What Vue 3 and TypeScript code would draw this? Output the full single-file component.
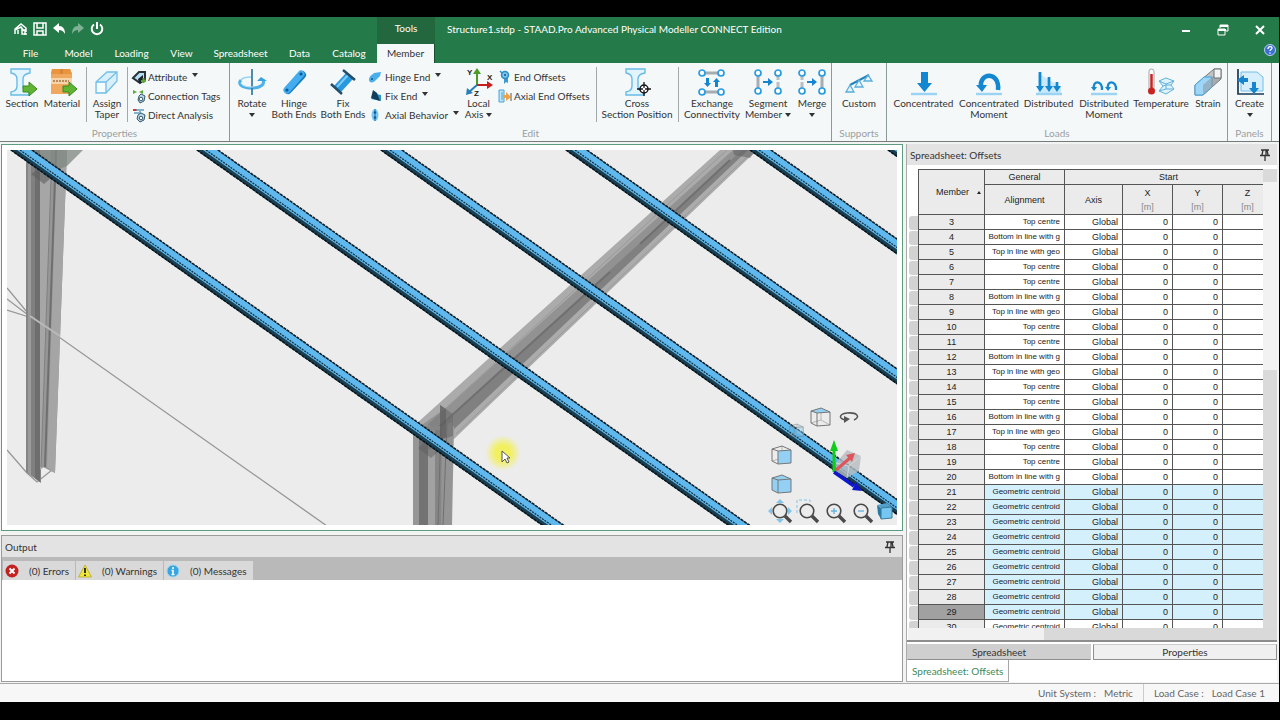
<script setup lang="ts">
import { ref } from 'vue'

interface BigTool { kind: 'big'; icon: string; lines: string[]; arrow?: 'inline' | 'below' }
interface SmallTool { icon: string; label: string; arrow?: boolean }
interface Stack { kind: 'stack'; items: SmallTool[] }
interface Separator { kind: 'sep' }
interface Group { id: string; label: string; tools: (BigTool | Stack | Separator)[] }

const big = (icon: string, lines: string[], arrow?: 'inline' | 'below'): BigTool => ({ kind: 'big', icon, lines, arrow })
const sep: Separator = { kind: 'sep' }

const iBeam = '<path d="M3 1h19v4q-7 1-7 6v7q0 5 6 6v3H3v-3q6-1 6-6v-7q0-5-6-6z" fill="#e2f4fd" stroke="#69bbe6" stroke-width="1.4"/>'
const greenArrow = '<path d="M15 18h6v-4l8 7-8 7v-4h-6z" fill="#5fb531" stroke="#3b8a1c"/>'
const node = (x: number, y: number) => `<circle cx="${x}" cy="${y}" r="3" fill="#fff" stroke="#2b9be0" stroke-width="1.7"/>`
const ground = '<path d="M1 26h26" stroke="#9bd3f5" stroke-width="2.4"/>'
const lens = '<circle cx="10" cy="10" r="6.8" fill="none" stroke="#4a4a4a" stroke-width="1.6"/><path d="M15 15l6 6" stroke="#4a4a4a" stroke-width="3.4"/>'

const icons: Record<string, string> = {
  section: iBeam + greenArrow,
  material: '<path d="M4 1h18l2 5v20H3V6z" fill="#f0a75e"/><path d="M4 1h18l2 5H3z" fill="#e9943f"/><path d="M12 1h3v5h-3z" fill="#d98535"/><path d="M3 10h21v6H3z" fill="#f7d3aa"/><path d="M5 13h16" stroke="#b78a5c" stroke-width="2" stroke-dasharray="2 1"/>' + greenArrow,
  taper: '<path d="M3 14L14 4h10v9L13 25H3z" fill="#d9f0fc" stroke="#73bfe8" stroke-width="1.300"/><path d="M3 14h10v11M13 14L24 4" fill="none" stroke="#73bfe8" stroke-width="1.300"/><path d="M4 15h8v9H4z" fill="#f5fcff"/>',
  rotate: '<path d="M3 12c-4 4 1 8 11 8 9 0 13-4 11-8" fill="none" stroke="#4eb2e8" stroke-width="3"/><path d="M3 12c2-3 7-3 10-3" fill="none" stroke="#9bd4f2" stroke-width="1.500"/><path d="M14 1v26" stroke="#33779f" stroke-width="1.700"/><path d="M19 13l4-4 6 4z" fill="#39a3df"/><path d="M3 15c1 3 7 4 12 4" fill="none" stroke="#d5f1ff" stroke-width="1"/>',
  hinge: '<path d="M8 22L22 7" stroke="#197ec2" stroke-width="8" stroke-linecap="round"/><path d="M7 22L21 6" stroke="#43adf0" stroke-width="7" stroke-linecap="round"/><circle cx="7" cy="22" r="1.600" fill="#0b5993"/><circle cx="21" cy="6" r="1.600" fill="#0b5993"/>',
  fix: '<path d="M5 18L17 5l7 6-12 13z" fill="#2999df"/><path d="M8 19L20 6" stroke="#7bccf8" stroke-width="2"/><path d="M14 2l12 10M2 16l11 10" stroke="#234e6a" stroke-width="2.500"/>',
  axis: '<path d="M12 18V4" stroke="#4b9b27" stroke-width="2"/><path d="M8 6l4-6 4 6z" fill="#4b9b27"/><path d="M12 17h11" stroke="#c71e1d" stroke-width="2"/><path d="M22 13l6 4-6 4z" fill="#c71e1d"/><path d="M12 17l-8 7" stroke="#267fb8" stroke-width="2"/><path d="M1 27l1-7 6 5z" fill="#267fb8"/><g font-family="Liberation Sans" font-weight="700" font-size="8" fill="#222"><text x="2" y="7">Y</text><text x="22" y="12">X</text><text x="9" y="28">Z</text></g>',
  cross: iBeam + '<circle cx="21" cy="21" r="4" fill="#fff" stroke="#151515" stroke-width="1.500"/><path d="M21 14v14M14 21h14" stroke="#151515" stroke-width="1.300"/><circle cx="21" cy="21" r="1.200" fill="#fff"/>',
  exchange: '<path d="M5 5h18M5 24h18" stroke="#a6adb2" stroke-width="3"/>' + node(4, 5) + node(23, 5) + node(4, 24) + node(23, 24) + '<path d="M8 10h3v5h2l-3.500 4L6 15h2zM17 19h3v-5h2l-3.500-4-3.500 4h2z" fill="#1784cf"/>',
  segment: '<path d="M4 5v19" stroke="#a6adb2" stroke-width="3"/><path d="M24 5v19" stroke="#b8bec1" stroke-width="3" stroke-dasharray="7 2"/>' + node(4, 5) + node(24, 5) + node(4, 23) + node(24, 23) + '<path d="M9 13h5v-3l5 4-5 4v-3H9z" fill="#1784cf"/>',
  merge: '<path d="M24 5v19" stroke="#a6adb2" stroke-width="3"/><path d="M4 5v19" stroke="#b8bec1" stroke-width="3" stroke-dasharray="7 2"/>' + node(4, 5) + node(24, 5) + node(4, 23) + node(24, 23) + '<path d="M9 13h5v-3l5 4-5 4v-3H9z" fill="#1784cf"/>',
  custom: '<path d="M5 17L24 7" stroke="#2583bf" stroke-width="2"/><path d="M5 17l-4 7h8zM14 12l-4 7h8zM23 7l-4 6h8z" fill="#e4f5fd" stroke="#58addb" stroke-width="1.300"/>',
  load: ground + '<path d="M11 4h7v11h4l-7.500 9L7 15h4z" fill="#1487d1"/>',
  moment: ground + '<path d="M6 19c-2-15 19-16 17 3" fill="none" stroke="#1487d1" stroke-width="4.500"/><path d="M1 17h11l-5 7z" fill="#1487d1"/>',
  distributed: '<path d="M3 5v20h23v-6z" fill="#c9e9fb"/>' + ground + '<path d="M5 4v16M14 9v11M22 14v6" stroke="#1487d1" stroke-width="2.700"/><path d="M1 18h8l-4 6zM10 18h8l-4 6zM18 18h8l-4 6z" fill="#1487d1"/>',
  distmoment: ground + '<path d="M4 21c-2-9 9-9 8 1M18 21c-2-9 9-9 8 1" fill="none" stroke="#1487d1" stroke-width="2.300"/><path d="M1 19h6l-3 4zM15 19h6l-3 4z" fill="#1487d1"/>',
  temperature: '<rect x="2" y="1" width="5" height="22" rx="2.500" fill="#fff" stroke="#a5a5a5"/><path d="M4.500 6v17" stroke="#c82323" stroke-width="2.500"/><circle cx="4.500" cy="23" r="3.500" fill="#c82323"/><path d="M12 13l7-3 8 3-3 4 3 4-8 5-7-3 4-5z" fill="#dff3fc" stroke="#62b1dc"/><path d="M12 13l7 3 8-3M16 18l3-1 5 0M19 16v5l-7 2M19 21h8" fill="none" stroke="#62b1dc"/>',
  strain: '<path d="M1 17L20 1h7v10L9 27H1z" fill="#c0c4c6" stroke="#747b80"/><path d="M1 17l9-8h8v10L9 27H1z" fill="#9fd5f6" stroke="#3da2da"/><path d="M9 17v10L27 11V1z" fill="#8b9196" opacity=".5"/><path d="M20 1h7v9h-7z" fill="#f3f3f3" stroke="#6e7275"/>',
  create: '<path d="M2 1v25h26" fill="none" stroke="#163953" stroke-width="1.700"/><path d="M5 4h16l6 5v14H5z" fill="#d7effc" stroke="#72bee8"/><path d="M12 10H8V7l-7 5 7 5v-3h4zM16 14h4v6h3l-5 6-5-6h3z" fill="#1685cd"/>',
  attribute: '<path d="M1 8l6-6h6v7l-5 4z" fill="#b7dff4" stroke="#29333a" stroke-width="2"/><path d="M6 9l5-4v7l-4 1z" fill="#1a2228"/><path d="M9 11h5M11.500 8v5" stroke="#5aaa33" stroke-width="2"/>',
  connection: '<path d="M1 1l4 2-4 2zM11 1L7 3l4 2z" fill="#5cab38"/><path d="M9 5l4 2-1 5-4 2-2-3 1-4z" fill="#b9ddee" stroke="#35586b"/><circle cx="9" cy="10" r="1.800" fill="#fff" stroke="#35586b"/>',
  direct: '<path d="M1 2h4" stroke="#d93434" stroke-width="2"/><path d="M4 2h8M2 5h5M8 3v4" stroke="#5f9dba" stroke-width="1.500"/><path d="M9 5l4 2-1 5-4 2-3-3 1-4z" fill="#b9ddee" stroke="#35586b"/><circle cx="9" cy="10" r="1.800" fill="#fff" stroke="#35586b"/>',
  hingeend: '<path d="M0 10c0-4 3-5 5-7l7-1-1 4-5 5c-2 2-6 2-6-1z" fill="#4aaeea"/><circle cx="3" cy="9" r="1" fill="#0e578a"/>',
  fixend: '<path d="M2 10L7 5l5 1v6z" fill="#2b91cd"/><path d="M4 1l4 3 3 8-9-3z" fill="#123e58"/>',
  axial: '<ellipse cx="6" cy="7" rx="3.500" ry="6" fill="#7ac8f2"/><path d="M6 1v12" stroke="#1c83c4" stroke-width="1.200"/><circle cx="6" cy="4.500" r="1.300" fill="#115c91"/><circle cx="6" cy="9.500" r="1.300" fill="#115c91"/>',
  endoff: '<path d="M5 6l5 1v6l-2-1-2 2V7z" fill="#399bd2"/><circle cx="7" cy="5" r="3.500" fill="#7cc4ec" stroke="#2c8cc6" stroke-width="1.500"/><circle cx="7" cy="5" r="1" fill="#12527d"/><path d="M2 1l2 2" stroke="#2c8cc6" stroke-width="1.500"/>',
  axialoff: '<path d="M1 1h5v12H1z" fill="#bfe3f6" stroke="#4aa5d6"/><path d="M4 3v8" stroke="#4aa5d6"/><path d="M13 4v8" stroke="#8b8b8b" stroke-width="1.500"/><path d="M5 6h3V3l5 5-5 4V9H5z" fill="#f2a040"/>',
}

const groups: Group[] = [
  { id: 'properties', label: 'Properties', tools: [
    big('section', ['Section']), big('material', ['Material']), sep, big('taper', ['Assign', 'Taper']), sep,
    { kind: 'stack', items: [
      { icon: 'attribute', label: 'Attribute', arrow: true },
      { icon: 'connection', label: 'Connection Tags' },
      { icon: 'direct', label: 'Direct Analysis' },
    ] },
  ] },
  { id: 'edit', label: 'Edit', tools: [
    big('rotate', ['Rotate'], 'below'), big('hinge', ['Hinge', 'Both Ends']), big('fix', ['Fix', 'Both Ends']),
    { kind: 'stack', items: [
      { icon: 'hingeend', label: 'Hinge End', arrow: true },
      { icon: 'fixend', label: 'Fix End', arrow: true },
      { icon: 'axial', label: 'Axial Behavior', arrow: true },
    ] },
    big('axis', ['Local', 'Axis'], 'inline'),
    { kind: 'stack', items: [
      { icon: 'endoff', label: 'End Offsets' },
      { icon: 'axialoff', label: 'Axial End Offsets' },
    ] },
    sep, big('cross', ['Cross', 'Section Position']), sep,
    big('exchange', ['Exchange', 'Connectivity']), big('segment', ['Segment', 'Member'], 'inline'), big('merge', ['Merge'], 'below'),
  ] },
  { id: 'supports', label: 'Supports', tools: [big('custom', ['Custom'])] },
  { id: 'loads', label: 'Loads', tools: [
    big('load', ['Concentrated']), big('moment', ['Concentrated', 'Moment']), big('distributed', ['Distributed']),
    big('distmoment', ['Distributed', 'Moment']), big('temperature', ['Temperature']), big('strain', ['Strain']),
  ] },
  { id: 'panels', label: 'Panels', tools: [big('create', ['Create'], 'below')] },
]

const tabs = ['File', 'Model', 'Loading', 'View', 'Spreadsheet', 'Data', 'Catalog', 'Member']
const activeTab = ref('Member')

const alignments = ['Top centre', 'Bottom in line with g', 'Top in line with geo', 'Top centre']
const rows = Array.from({ length: 28 }, (_, i) => {
  const member = i + 3
  return {
    member,
    alignment: member > 20 ? 'Geometric centroid' : alignments[i % 4],
    selected: member > 20 && member < 30,
    current: member === 29,
  }
})

/* Purlins: x where each lower edge meets the top of the view */
const purlins = [10, 196, 380, 565, 749, 887].map(x => {
  const len = 800
  const dy = len * 0.706
  const pts = (a: number, b: number) => `${x + a},150 ${x + b},150 ${x + b + len},${150 + dy} ${x + a + len},${150 + dy}`
  const line = (o: number) => ({ x1: x + o, y1: 150, x2: x + o + len, y2: 150 + dy })
  return { body: pts(0, 22), face: pts(7, 21), top: line(22), mid: line(10), low: line(1) }
})

const lensIcons = [
  { id: 'fit', label: 'Zoom extents', art: '<path d="M10 -2l4 4H6zM10 22l4-4H6zM-2 10l4-4v8zM22 10l-4-4v8z" fill="#83c5ea"/>' + lens },
  { id: 'window', label: 'Zoom window', art: '<path d="M0 12V-1h13v3" fill="none" stroke="#83c5ea" stroke-dasharray="3 2"/>' + lens },
  { id: 'in', label: 'Zoom in', art: lens + '<path d="M7 10h6M10 7v6" stroke="#62b2e1" stroke-width="1.300"/>' },
  { id: 'out', label: 'Zoom out', art: lens + '<path d="M7 10h6" stroke="#62b2e1" stroke-width="1.300"/>' },
]
const cube = (fill: string) => fill + '<path d="M1 4l6 2v13l-6-3zM7 6l13-1v13l-13 1M1 4l10-3 9 4" fill="none" stroke="#777" stroke-width="1"/>'
const cubes = [
  { id: 'top', label: 'Top view', art: '<path d="M11 1v12L1 16M11 13l9 5" fill="none" stroke="#b5b5b5"/>' + cube('<path d="M1 4l10-3 9 4-13 1z" fill="#93d0f3"/>') },
  { id: 'back', label: 'Back view', art: '<path d="M11 1v12L1 16M11 13l9 5" fill="none" stroke="#999"/>' + cube('<path d="M11 2l9 3v13l-9-5z" fill="#93d0f3" opacity=".7"/>') },
  { id: 'side', label: 'Side view', art: '<path d="M11 1v12L1 16" fill="none" stroke="#b5b5b5"/>' + cube('<path d="M7 6l13-1v13l-13 1z" fill="#93d0f3"/>') },
  { id: 'front', label: 'Front view', art: cube('<path d="M1 4l10-3 9 4v13l-13 1-6-3z" fill="#93d0f3"/>') },
]
</script>

<template>
  <div class="app">
    <header class="header">
      <div class="titlebar">
        <div class="quick">
          <button aria-label="Structure"><svg width="14" height="14" viewBox="0 0 14 14"><path d="M1 12V7l6-5 5 4v4M1 8l6-3 3 4M4 12V8M8 6v6h5M11 7v6" fill="none" stroke="#fff" stroke-width="1.500" /></svg></button>
          <button aria-label="Save"><svg width="14" height="14" viewBox="0 0 14 14"><path d="M1 1h12v12H1zM4 1v5h6V1M4 13V9h6v4" fill="none" stroke="#fff" stroke-width="1.500" /></svg></button>
          <button aria-label="Undo"><svg width="14" height="14" viewBox="0 0 14 14"><path d="M1 6l6-5v3c4 0 6 3 6 8-2-3-3-4-6-4v3z" fill="#fff" /></svg></button>
          <button aria-label="Redo"><svg width="14" height="14" viewBox="0 0 14 14"><path d="M13 6L7 1v3c-4 0-6 3-6 8 2-3 3-4 6-4v3z" fill="#7eb294" /></svg></button>
          <button aria-label="Power"><svg width="14" height="14" viewBox="0 0 14 14"><path d="M4 2.500a5.300 5.300 0 1 0 6 0M7 0v7" fill="none" stroke="#fff" stroke-width="2" /></svg></button>
        </div>
        <div class="context">Tools</div>
        <h1 class="title">Structure1.stdp - STAAD.Pro Advanced Physical Modeller CONNECT Edition</h1>
        <div class="window-buttons">
          <button aria-label="Minimize"><svg width="12" height="12" viewBox="0 0 12 12"><path d="M2 7h8" stroke="#fff" stroke-width="2" /></svg></button>
          <button aria-label="Restore"><svg width="12" height="12" viewBox="0 0 12 12"><path d="M1 5h7v6H1zM3 4V1h8v6H9" fill="none" stroke="#fff" /><path d="M1 6h8M3 2h8" stroke="#fff" stroke-width="2" /></svg></button>
          <button aria-label="Close"><svg width="12" height="12" viewBox="0 0 12 12"><path d="M2 2l8 8M10 2l-8 8" stroke="#fff" stroke-width="2" /></svg></button>
        </div>
      </div>
      <nav class="tabs">
        <button v-for="t in tabs" :key="t" class="tab" :class="{ active: t === activeTab }" @click="activeTab = t">{{ t }}</button>
        <button class="help" aria-label="Help"><svg width="12" height="12" viewBox="0 0 12 12"><circle cx="6" cy="6" r="5.500" fill="#3b6fd0" stroke="#b9cdf0" /><path d="M4 5c0-3 4-3 4-1 0 1.500-2 1.500-2 3M6 8.500v1.200" fill="none" stroke="#fff" stroke-width="1.300" /></svg></button>
      </nav>
    </header>

    <section class="ribbon" aria-label="Ribbon">
      <div v-for="g in groups" :key="g.id" class="group" :class="g.id">
        <div class="tools">
          <template v-for="(t, i) in g.tools" :key="i">
            <span v-if="t.kind === 'sep'" class="sep"></span>
            <button v-else-if="t.kind === 'big'" class="big">
              <svg width="28" height="28" viewBox="0 0 28 28" v-html="icons[t.icon]"></svg>
              <span v-for="(l, n) in t.lines" :key="l" class="line">{{ l }}<i v-if="t.arrow === 'inline' && n === t.lines.length - 1" class="arrow"></i></span>
              <span v-if="t.arrow === 'below'" class="line"><i class="arrow alone"></i></span>
            </button>
            <div v-else class="stack">
              <button v-for="s in t.items" :key="s.label" class="small">
                <svg width="14" height="14" viewBox="0 0 14 14" v-html="icons[s.icon]"></svg>
                <span>{{ s.label }}</span><i v-if="s.arrow" class="arrow raised"></i>
              </button>
            </div>
          </template>
        </div>
        <div class="group-label">{{ g.label }}</div>
      </div>
    </section>

    <main class="workspace">
      <div class="left">
        <section class="view" aria-label="Model view">
          <div class="canvas">
            <svg class="scene" viewBox="7 150 890 376" preserveAspectRatio="xMinYMin slice">
              <g stroke="#979797" stroke-width="1.300" fill="none">
                <path d="M7 288l25 30M7 299l25 19M7 310l25 8 295 208M7 450l20 23 10 9 15-12" />
              </g>
              <g>
                <path d="M26 150h15v333l-15-11z" fill="#858585" />
                <path d="M28 150h7v328l-7-5z" fill="#9b9b9b" />
                <path d="M31 150h4v328l-4-3z" fill="#808080" />
                <path d="M35 150h5v332l-5-4z" fill="#6e6e6e" />
                <path d="M40 150h13l-9 317-4 3z" fill="#a6a6a6" />
                <path d="M52 150h15l-12 323-14-7z" fill="#969696" />
                <path d="M57 150h10l-12 323-8-6z" fill="#a5a5a5" />
                <path d="M56 150l-11 317" stroke="#6f6f6f" stroke-width="2" />
                <path d="M52 150l-11 317" stroke="#808080" />
                <path d="M28 150h55l-16 16-20 8z" fill="#7f8782" opacity=".75" />
                <path d="M31 174l18-12 10 9-15 13z" fill="#5f5f5f" opacity=".6" />
                <path d="M30 316l30 20" stroke="#b9b9b9" stroke-width="2" />
              </g>
              <g>
                <path d="M416 424L720 150h38l-4 3-300 286-38 4z" fill="#ababab" />
                <path d="M427 425L733 150h15L447 430z" fill="#929292" />
                <path d="M440 425L742 150h6L450 433z" fill="#808080" />
                <path d="M434 419L727 150M456 434L751 153" stroke="#999" />
                <path d="M438 428L610 272M640 244l90-84" stroke="#707070" stroke-width="2" />
                <path d="M733 150h23l-6 8-16-3z" fill="#666" opacity=".6" />
                <path d="M413 426h41l-2 100h-39z" fill="#969696" />
                <path d="M419 432h9v94h-9z" fill="#737373" />
                <path d="M428 430h7v96h-7z" fill="#a2a2a2" />
                <path d="M435 430h7v96h-7z" fill="#868686" />
                <path d="M442 426l10-4-1 104h-10z" fill="#949494" />
                <path d="M441 424l-3 102M447 424l-4 102" stroke="#707070" />
                <path d="M440 405l13 9v22l-13 4z" fill="#6a6a6a" opacity=".6" />
                <path d="M440 405l6 4v28l-6 3z" fill="#555" opacity=".5" />
                <path d="M418 448l18-15 4 17-9 8z" fill="#5f5f5f" opacity=".5" />
                <path d="M422 425l18-13v35l-18 4z" fill="#666" opacity=".35" />
              </g>
              <g v-for="(p, i) in purlins" :key="i">
                <polygon :points="p.body" fill="#1a3e50" />
                <polygon :points="p.face" fill="#5fb9ee" />
                <line v-bind="p.top" stroke="#0b1a22" stroke-width="1.500" stroke-dasharray="3 1" />
                <line v-bind="p.mid" stroke="#143242" stroke-width="1.300" stroke-dasharray="2 1" />
                <line v-bind="p.low" stroke="#07131a" stroke-width="1.500" stroke-dasharray="3 1" />
              </g>
            </svg>
            <div class="pointer">
              <svg width="12" height="16" viewBox="0 0 12 16"><path d="M2 2v11l3-3 2 4 2-1-2-4h3z" fill="#fff" stroke="#555" stroke-width="1" /></svg>
            </div>
            <button v-for="c in cubes" :key="c.id" class="cube" :class="'cube-' + c.id" :aria-label="c.label">
              <svg :width="c.id === 'back' ? 15 : 21" :height="c.id === 'back' ? 15 : 20" viewBox="0 0 21 20" v-html="c.art"></svg>
            </button>
            <button class="orbit" aria-label="Orbit"><svg width="20" height="12" viewBox="0 0 20 12"><path d="M7 9C-1 8 0 3 8 2c10-1 14 4 7 7" fill="none" stroke="#555" stroke-width="1.600" /><path d="M11 8L5 5v7z" fill="#555" /></svg></button>
            <svg class="triad" width="64" height="56" viewBox="0 0 64 56">
              <path d="M17 24l11-13 14 6-2 15-12 7-12-7z" fill="#b7bcbf" opacity=".8" />
              <path d="M17 24l13 3 12-10M30 27l-2 12" fill="none" stroke="#ddd" opacity=".7" />
              <path d="M17 31l14-12" stroke="#dd555b" stroke-width="3" /><path d="M27 16l9-2-3 9z" fill="#dd555b" />
              <path d="M15 33V9" stroke="#12cc1b" stroke-width="3" /><path d="M11 12l4-11 4 11z" fill="#12cc1b" />
              <path d="M15 33l20 14" stroke="#0f17cd" stroke-width="3.500" /><path d="M33 51l4-8 6 9z" fill="#0f17cd" />
            </svg>
            <div class="zoom-bar">
              <button v-for="z in lensIcons" :key="z.id" :aria-label="z.label">
                <svg width="22" height="22" viewBox="-1 -1 22 22" v-html="z.art"></svg>
              </button>
              <button class="perspective" aria-label="Perspective"><svg width="16" height="16" viewBox="0 0 16 16"><path d="M0 2l4 3v11l-3-5z" fill="#277ba6" /><path d="M0 2l10-2 5 4-11 1z" fill="#4f9fc8" /><path d="M4 5l11-1v11l-11 1z" fill="#75c6f0" stroke="#3b7a9a" /></svg></button>
            </div>
          </div>
        </section>

        <section class="output" aria-label="Output">
          <div class="panel-head"><h2>Output</h2><button aria-label="Pin"><svg width="10" height="12" viewBox="0 0 10 12"><path d="M1 1h8M3 1L2 6M7 1l1 5M6 1v5M0 6.500h10M5 7v5" fill="none" stroke="#333" stroke-width="1.300" /></svg></button></div>
          <div class="filters">
            <button class="f-errors"><svg width="14" height="14" viewBox="0 0 14 14"><circle cx="7" cy="7" r="6.500" fill="#c3211f" /><path d="M4.500 4.500l5 5M9.500 4.500l-5 5" stroke="#fff" stroke-width="2" /></svg>(0) Errors</button>
            <button class="f-warnings"><svg width="14" height="14" viewBox="0 0 14 14"><path d="M7 1l6.500 12H.5z" fill="#f3e63a" stroke="#b4aa2a" stroke-width=".8" /><path d="M7 4v5M7 10.500V12" stroke="#222" stroke-width="1.800" /></svg>(0) Warnings</button>
            <button class="f-messages"><svg width="14" height="14" viewBox="0 0 14 14"><circle cx="7" cy="7" r="6" fill="#36a5e0" stroke="#9bd4f2" /><path d="M7 3v2M5.500 6.500H7V10M5.500 10.500h3" fill="none" stroke="#fff" stroke-width="1.500" /></svg>(0) Messages</button>
          </div>
        </section>
      </div>

      <aside class="right">
        <div class="panel-head"><h2>Spreadsheet: Offsets</h2><button aria-label="Pin"><svg width="10" height="12" viewBox="0 0 10 12"><path d="M1 1h8M3 1L2 6M7 1l1 5M6 1v5M0 6.500h10M5 7v5" fill="none" stroke="#333" stroke-width="1.300" /></svg></button></div>
        <div class="sheet">
          <div class="clip">
            <table>
              <colgroup><col class="c-gut"><col class="c-mem"><col class="c-ali"><col class="c-axi"><col class="c-num"><col class="c-num"><col class="c-num"></colgroup>
              <thead>
                <tr class="h1"><td rowspan="2" class="corner"></td><th rowspan="2"><span class="member-head">Member<i></i></span></th><th>General</th><th colspan="4" class="start">Start</th></tr>
                <tr class="h2"><th>Alignment</th><th>Axis</th><th v-for="a in ['X', 'Y', 'Z']" :key="a" class="unit">{{ a }}<small>[m]</small></th></tr>
              </thead>
              <tbody>
                <tr v-for="r in rows" :key="r.member" :class="{ selected: r.selected, current: r.current }">
                  <td class="gutter"><span></span></td>
                  <th scope="row">{{ r.member }}</th>
                  <td class="ali">{{ r.alignment }}</td><td>Global</td><td>0</td><td>0</td><td></td>
                </tr>
              </tbody>
            </table>
          </div>
          <div class="vbar"><span></span></div>
          <div class="hbar"><span></span></div>
        </div>
        <div class="switch"><button class="on">Spreadsheet</button><button>Properties</button></div>
        <div class="doc-tabs"><button>Spreadsheet: Offsets</button></div>
      </aside>
    </main>

    <footer class="status">
      <span>Unit System :</span><span class="val">Metric</span>
      <span class="case">Load Case :</span><span class="val">Load Case 1</span>
    </footer>
  </div>
</template>

<style>
html, body { margin: 0; background: #000; }
</style>

<style scoped>
* { box-sizing: border-box; }
.app {
  height: 100vh; padding: 17px 1px 18px 0; background: #000; color: #333;
  display: flex; flex-direction: column; overflow: hidden;
  font: 10px/12px Lato, "Open Sans", sans-serif;
}
button { font: inherit; color: inherit; background: none; border: 0; padding: 0; margin: 0; white-space: nowrap; }
svg { display: block; overflow: visible; }
h1, h2 { font: inherit; margin: 0; }

.header { background: #257a49; color: #fff; flex: none; }
.titlebar { display: flex; height: 27px; }
.quick { flex: 0 0 377px; display: flex; align-items: center; gap: 5px; padding: 0 14px 3px; }
.context { flex: 0 0 58px; background: #23673f; text-align: center; line-height: 22px; }
.title { padding-left: 12px; line-height: 24px; flex: 1; white-space: nowrap; }
.window-buttons { display: flex; align-items: center; gap: 25px; padding: 0 13px 2px 0; }
.tabs {
  display: grid; height: 19px; padding-left: 7px; align-items: stretch;
  grid-template-columns: 47px 49px 57px 43px 75px 43px 56px 58px 1fr;
}
.tab { padding-bottom: 2px; }
.tabs .active { background: #f4f8f9; color: #333; border-right: 1px solid #174e2e; }
.help { justify-self: end; align-self: start; padding-right: 3px; }

.ribbon { display: flex; flex: none; height: 79px; background: #f4f8f9; border-bottom: 1px solid #757c7a; overflow: hidden; }
.group { flex: none; display: flex; flex-direction: column; border-right: 1px solid #90999a; }
.tools { display: grid; flex: 1; }
.properties .tools { padding-left: 2px; grid-template-columns: 40px 40px 9px 32px 8px 98px; }
.edit .tools { padding: 0 1px 0 4px; grid-template-columns: 36px 48px 50px 92px 37px 95px 8px 74px 8px 60px 52px 36px; }
.supports .tools { grid-template-columns: 54px; }
.loads .tools { padding: 0 3px 0 1px; grid-template-columns: 71px 60px 59px 52px 62px 32px; }
.panels .tools { grid-template-columns: 43px; }
.group-label { height: 16px; line-height: 16px; text-align: center; color: #9b9fa0; }
.sep { width: 1px; margin: 4px auto 3px; background: #a2a9ab; }
.big { display: flex; flex-direction: column; align-items: center; padding-top: 5px; }
.big svg { margin-bottom: 2px; flex: none; }
.line { display: flex; align-items: center; height: 11px; line-height: 11px; }
.arrow { width: 0; height: 0; border: 3px solid transparent; border-top: 4px solid #333; border-bottom: 0; margin-left: 3px; }
.alone { margin-left: 0; }
.raised { margin-bottom: 4px; }
.stack { padding: 4px 0 0 1px; }
.small { display: flex; align-items: center; gap: 2px; height: 19px; }

.workspace { flex: 1; min-height: 0; display: flex; gap: 3px; padding: 2px 2px 1px 1px; background: #f1f4f3; }
.left { flex: 1; min-width: 0; display: flex; flex-direction: column; gap: 4px; }
.view { flex: 1; min-height: 0; padding: 5px; background: #fff; border: 1px solid #5e9c81; display: flex; }
.canvas { position: relative; flex: 1; overflow: hidden; background: #ececec; }
.scene { width: 100%; height: 100%; overflow: hidden; }
.pointer { position: absolute; left: 55%; top: 76%; width: 36px; height: 36px; margin-left: -12px; background: radial-gradient(circle, #f2f060 30%, #f2f06000 70%); }
.pointer svg { margin: 14px 0 0 15px; }
.cube { position: absolute; }
.cube-top { right: 66px; bottom: 98px; }
.cube-back { right: 93px; bottom: 87px; opacity: .7; }
.cube-side { right: 105px; bottom: 60px; }
.cube-front { right: 105px; bottom: 31px; }
.orbit { position: absolute; right: 38px; bottom: 102px; }
.triad { position: absolute; right: 14px; bottom: 30px; }
.zoom-bar { position: absolute; right: 4px; bottom: 3px; display: flex; align-items: center; gap: 5px; }

.panel-head { display: flex; justify-content: space-between; align-items: center; height: 21px; padding: 0 7px 0 3px; background: #e3e3e3; flex: none; }
.output { flex: 0 0 147px; background: #fff; border: 1px solid #9b9b9b; }
.filters { display: flex; align-items: flex-end; gap: 1px; height: 23px; padding-left: 1px; background: #b9b9b9; }
.filters button { display: flex; align-items: center; height: 19px; padding: 0 6px 0 2px; background: #d9d9d9; }
.filters svg { margin-right: 10px; }

.right { flex: 0 0 371px; display: flex; flex-direction: column; background: #fff; border-left: 1px solid #aaa; min-width: 0; }
.sheet { flex: 1; min-height: 0; display: grid; grid-template: minmax(0, 1fr) 12px / minmax(0, 1fr) 14px; padding: 4px 0 0 2px; }
.clip { overflow: hidden; }
table { width: 364px; table-layout: fixed; border-collapse: separate; border-spacing: 0; font: 9px/12px "Liberation Sans", Arial, sans-serif; }
.c-gut { width: 10px; } .c-mem { width: 66px; } .c-ali { width: 80px; } .c-axi { width: 58px; } .c-num { width: 50px; }
th, td { padding: 0; height: 15px; font-weight: 400; border-right: 1px solid #555; border-bottom: 1px solid #555; white-space: nowrap; color: #222; }
td { text-align: right; padding-right: 4px; line-height: 14px; }
th { background: #ebebeb; text-align: center; line-height: 14px; }
.h1 th, .h1 .corner { border-top: 1px solid #555; height: 16px; }
.h1 .corner { border-top: 0; border-bottom: 0; }
.h2 th { height: 30px; }
.start { padding-right: 40px; padding-left: 40px; }
.unit { line-height: 14px; }
.unit small { display: block; font-size: 9px; color: #888; }
.member-head { display: flex; justify-content: flex-end; align-items: center; gap: 8px; padding-right: 3px; }
.member-head i { border: 2px solid transparent; border-bottom: 3px solid #222; border-top: 0; }
.gutter { padding: 0; border-bottom: 0; }
.gutter span { display: block; height: 14px; background: #d2d2d2; border-radius: 3px 0 0 3px; }
.ali { font-size: 8px; }
.selected td:not(.gutter) { background: #d4f0fd; }
.current th { background: #a1a1a1; }
.vbar { background: #dadada; padding-top: 13px; }
.vbar span { display: block; height: 188px; background: #f2f2f2; }
.hbar { grid-column: 1 / -1; background: #d9d9d9; margin-left: -1px; }
.hbar span { display: block; width: 136px; height: 12px; background: #f1f1f1; }
.switch { display: grid; grid-template-columns: 1fr 1fr; gap: 2px; height: 20px; padding-top: 2px; border-top: 2px solid #8d8d8d; }
.switch button { background: #f0f0f0; border: 1px solid #8f8f8f; border-top-color: #ccc; }
.switch .on { background: #cfcfcf; border-color: #cfcfcf; border-bottom-color: #8f8f8f; }
.doc-tabs { height: 22px; display: flex; flex: none; }
.doc-tabs button { padding: 0 5px; color: #3b8a5c; border: 1px solid #a6a6a6; border-top: 0; border-left: 0; }

.status { flex: none; display: flex; align-items: center; justify-content: flex-end; height: 19px; padding-right: 14px; background: #f7f7f7; border-top: 1px solid #aaa; color: #666; }
.val { margin-left: 8px; }
.case { margin-left: 10px; padding-left: 10px; border-left: 1px solid #ccc; line-height: 18px; }
</style>
